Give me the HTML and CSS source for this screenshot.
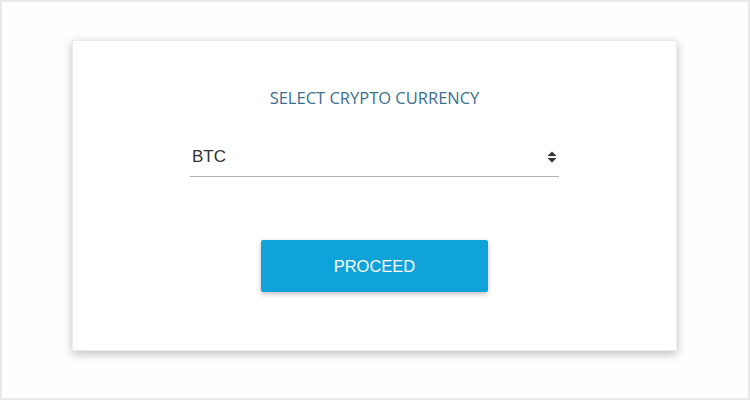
FILE: index.html
```html
<!DOCTYPE html>
<html>
<head>
<meta charset="utf-8">
<link rel="stylesheet" href="styles.css">
</head>
<body>
<div class="frame">
  <div class="card">
    <h2 class="title">SELECT CRYPTO CURRENCY</h2>
    <div class="select">
      <span class="value">BTC</span>
      <svg class="arrows" width="10" height="12" viewBox="0 0 10 12"><path d="M5 0.5 L9.5 5 L0.5 5 Z M0.5 7 L9.5 7 L5 11.5 Z" fill="#333"/></svg>
    </div>
    <button class="btn">PROCEED</button>
  </div>
</div>
</body>
</html>
```
FILE: styles.css
```css
* { box-sizing: border-box; }
html, body { margin: 0; padding: 0; background: #fff; }
.frame {
  width: 750px;
  height: 400px;
  border: 2px solid #e8e8e8;
  background: #fefefe;
  padding-top: 38px;
}
.card {
  width: 605px;
  height: 311px;
  margin-left: 70px;
  background: #fff;
  border: 1px solid #ececec;
  box-shadow: 0 3px 9px rgba(0,0,0,0.25);
  display: flex;
  flex-direction: column;
  align-items: center;
  padding-top: 46px;
}
.title {
  margin: 0;
  font-family: "Open Sans", sans-serif;
  font-weight: 400;
  font-size: 16.5px;
  line-height: 22px;
  color: #3d6f8f;
}
.select {
  margin-top: 31px;
  width: 369px;
  height: 37px;
  border-bottom: 1px solid #b0b0b0;
  display: flex;
  align-items: center;
  justify-content: space-between;
  padding: 0 2px 2px 2px;
}
.value {
  font-family: "Liberation Sans", Arial, sans-serif;
  font-size: 17px;
  color: #333;
}
.arrows { display: block; }
.btn {
  margin-top: 63px;
  width: 227px;
  height: 52px;
  background: #0fa3da;
  border: none;
  border-radius: 2px;
  color: #fff;
  font-family: "Liberation Sans", Arial, sans-serif;
  font-size: 16.5px;
  box-shadow: 0 2px 5px rgba(0,0,0,0.25);
}
```
